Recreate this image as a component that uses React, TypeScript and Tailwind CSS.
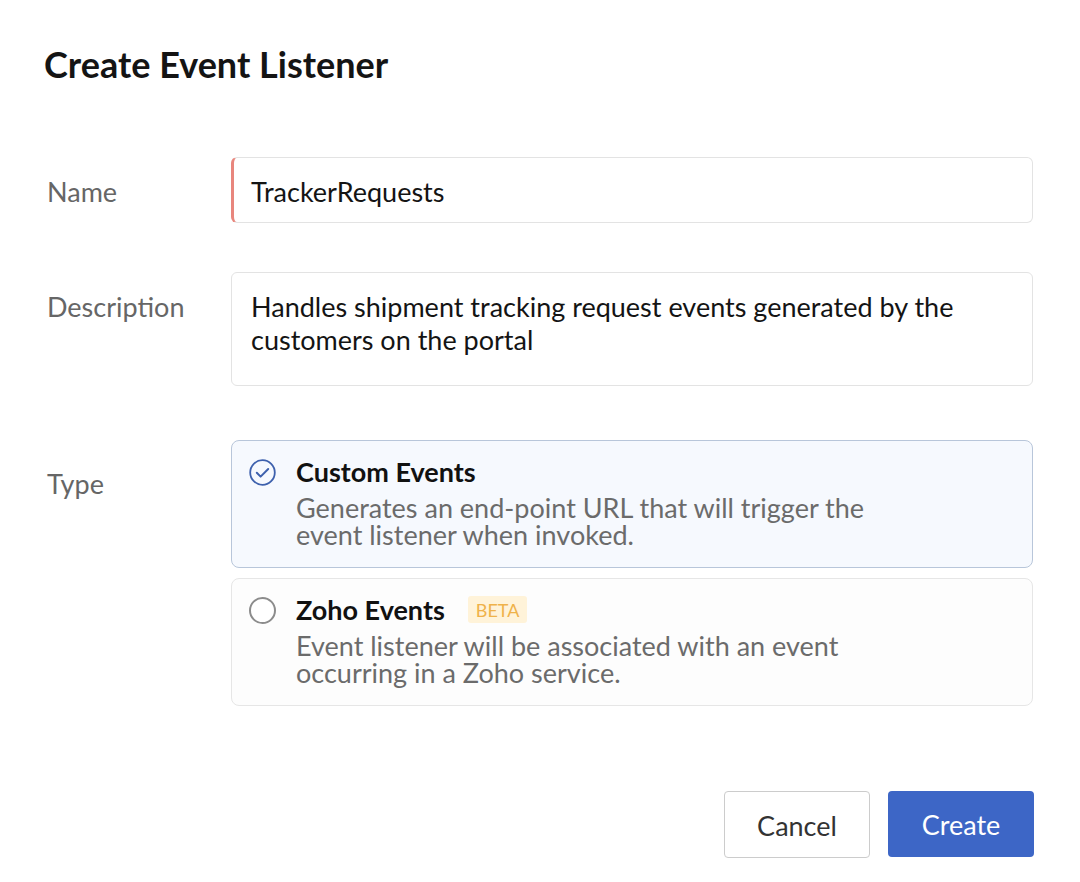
function Label({ children }: { children: string }) {
  return <div className="w-[184px] shrink-0 text-[27px] text-[#666666]">{children}</div>;
}

function CheckedRadio() {
  return (
    <svg width="27" height="27" viewBox="0 0 27 27" fill="none">
      <circle cx="13.5" cy="13.5" r="12.3" stroke="#3e61ad" strokeWidth="1.8" />
      <path
        d="M7.8 13.8l3.8 3.8 7.6-7.6"
        stroke="#3e61ad"
        strokeWidth="2"
        strokeLinecap="round"
        strokeLinejoin="round"
      />
    </svg>
  );
}

function TypeOption({
  title,
  description,
  selected,
  beta
}: {
  title: string;
  description: string;
  selected?: boolean;
  beta?: boolean;
}) {
  return (
    <div
      className={
        selected
          ? "flex h-[128px] gap-[20px] rounded-[8px] border border-[#b8c6da] bg-[#f6f9fe] px-[17px] pt-[14px]"
          : "flex h-[128px] gap-[20px] rounded-[8px] border border-[#e6e6e6] bg-[#fdfdfd] px-[17px] pt-[14px]"
      }
    >
      <div className="pt-[4px]">
        {selected ? (
          <CheckedRadio />
        ) : (
          <div className="h-[27px] w-[27px] rounded-full border-2 border-[#8c8c8c] bg-white" />
        )}
      </div>
      <div>
        <div className="flex items-center gap-[23px]">
          <span className="text-[27px] font-bold leading-[33px] text-[#111111]">{title}</span>
          {beta ? (
            <span className="rounded-[3px] bg-[#fff3d9] px-[8px] pb-[1px] pt-[3px] text-[18px] leading-[23px] text-[#efb24a]">
              BETA
            </span>
          ) : null}
        </div>
        <p className="mt-[6px] max-w-[600px] text-[27px] leading-[27px] text-[#6b6b6b]">{description}</p>
      </div>
    </div>
  );
}

export default function App() {
  return (
    <div
      className="min-h-screen bg-white px-[44px] pt-[41px]"
      style={{ fontFamily: "Lato, 'Open Sans', sans-serif" }}
    >
      <h1 className="text-[36px] font-bold leading-[46px] text-[#141414]">Create Event Listener</h1>

      <div className="mt-[70px] flex flex-col">
        <div className="flex items-center pl-[3px]">
          <div className="pt-[4px]">
            <Label>Name</Label>
          </div>
          <div className="flex h-[66px] w-[802px] items-center rounded-[6px] border border-[#e3e3e3] border-l-[3px] border-l-[#e8867d] pl-[17px] pt-[4px] text-[27px] text-[#141414]">
            TrackerRequests
          </div>
        </div>

        <div className="mt-[49px] flex items-start pl-[3px]">
          <div className="pt-[15px]">
            <Label>Description</Label>
          </div>
          <div className="h-[114px] w-[802px] rounded-[6px] border border-[#e3e3e3] px-[19px] pt-[17px] text-[27px] leading-[33px] text-[#141414]">
            Handles shipment tracking request events generated by the customers on the portal
          </div>
        </div>

        <div className="mt-[54px] flex items-start pl-[3px]">
          <div className="pt-[24px]">
            <Label>Type</Label>
          </div>
          <div className="flex w-[802px] flex-col gap-[10px]">
            <TypeOption
              selected
              title="Custom Events"
              description="Generates an end-point URL that will trigger the event listener when invoked."
            />
            <TypeOption
              beta
              title="Zoho Events"
              description="Event listener will be associated with an event occurring in a Zoho service."
            />
          </div>
        </div>

        <div className="mt-[85px] flex justify-end gap-[18px] pr-[2px]">
          <button className="h-[67px] w-[146px] rounded-[4px] border border-[#cccccc] bg-white pt-[3px] text-[27px] text-[#333333]">
            Cancel
          </button>
          <button className="h-[66px] w-[146px] rounded-[4px] bg-[#3d66c6] pt-[3px] text-[27px] text-white">
            Create
          </button>
        </div>
      </div>
    </div>
  );
}
